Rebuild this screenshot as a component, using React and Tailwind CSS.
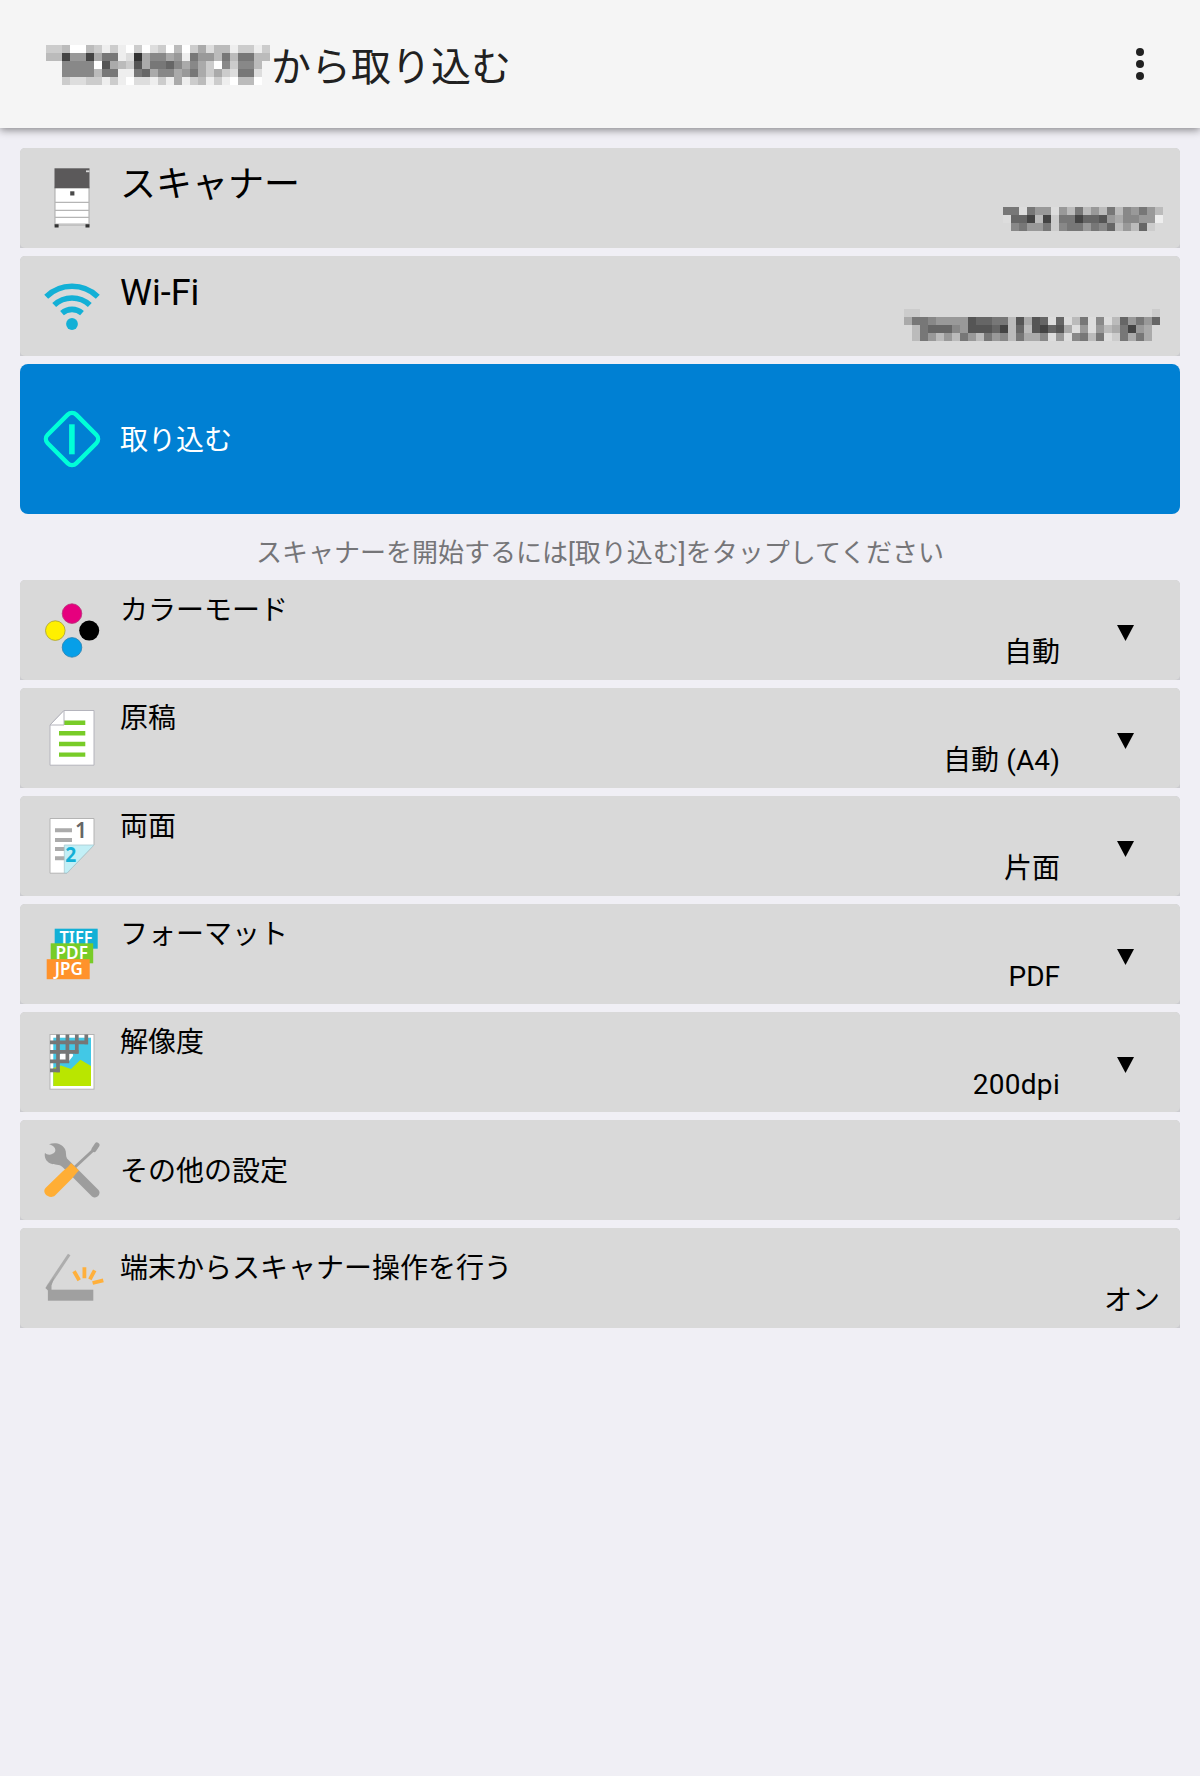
import React from 'react';

// One hex digit per cell, '.' leaves the cell empty
const TITLE_MOSAIC = [
  'ccbffbcecefcfdcfbfcadbbeccec',
  'bb4994a77ed3a88a9e799b7b77bb',
  '..8888f5abc5a7768a8acf8c88b.',
  '..8888b77ee76a88a97acacd77d.',
  '..cddccecefddeceaecbecefbbf.',
];

const SCANNER_MOSAIC = [
  '77d799d9b7b9b7b8979b',
  'd664b4c7746659a8899e',
  '.87997c8779786b9b6c.',
];

const WIFI_MOSAIC = [
  'cc.............................c',
  'a778999956677b5a56d6db7d8db69796',
  '.b76668955564b6b5465ad9d9ba749a.',
  '.b79b9b79b798b7aa8d9d87b7dc7a7a.',
];

function Mosaic({ rows, className }) {
  const cols = rows[0].length;
  return (
    <svg className={className} width={cols * 8} height={rows.length * 8} shapeRendering="crispEdges">
      {rows.map((row, y) =>
        row.split('').map((c, x) =>
          c === '.' ? null : <rect key={`${x}-${y}`} x={x * 8} y={y * 8} width="8" height="8" fill={`#${c}${c}${c}`} />
        )
      )}
    </svg>
  );
}

function Icon({ children }) {
  return (
    <svg className="shrink-0 overflow-visible" width="60" height="60" viewBox="0 0 60 60" fill="none">
      {children}
    </svg>
  );
}

function CopierIcon() {
  return (
    <Icon>
      <rect x="13" y="19" width="34" height="38" fill="#fff" stroke="#a9a9a9" />
      <rect x="12.5" y="0.3" width="35" height="20" fill="#5b595a" />
      <path d="M44 3.3h3.5" stroke="#d9d9d9" strokeWidth="1.8" />
      <rect x="28.2" y="23.3" width="4.2" height="4.2" fill="#4a4a4a" />
      <path d="M13 34.4h34M13 42.4h34M13 49.4h34M13 56h34" stroke="#b5b5b5" strokeWidth="1.2" />
      <path d="M12.6 56.3h4v3.2h-4zM43.5 56.3h4v3.2h-4z" fill="#333" />
    </Icon>
  );
}

function WifiIcon() {
  return (
    <Icon>
      <g stroke="#13b0d6" strokeWidth="5.6">
        <path d="M4.2 20.8A37 37 0 0 1 55.8 20.8" />
        <path d="M12.2 29A26 26 0 0 1 47.8 29" />
        <path d="M20 37.2A15 15 0 0 1 40 37.2" />
      </g>
      <circle cx="30" cy="48" r="5.9" fill="#13b0d6" />
    </Icon>
  );
}

function StartIcon() {
  return (
    <Icon>
      <rect x="9.8" y="9.8" width="40.4" height="40.4" rx="6" transform="rotate(45 30 30)" stroke="#00ffd8" strokeWidth="4.4" />
      <rect x="27.1" y="15.3" width="5.6" height="30" fill="#00ffd8" />
    </Icon>
  );
}

function ColorIcon() {
  return (
    <Icon>
      <circle cx="30" cy="13.6" r="9.8" fill="#e6007e" stroke="#b8307a" strokeWidth="0.8" />
      <circle cx="13.3" cy="30.6" r="9.8" fill="#fff000" stroke="#a8a030" strokeWidth="0.8" />
      <circle cx="47.2" cy="30.6" r="10" fill="#000" />
      <circle cx="30" cy="47.4" r="9.8" fill="#069fe8" stroke="#2a80b0" strokeWidth="0.8" />
    </Icon>
  );
}

function OriginalIcon() {
  return (
    <Icon>
      <path d="M22 2.5H52V57.2H8V17z" fill="#fff" stroke="#b4b4bc" />
      <path d="M22 14.8h21.3M17 25.3h26.3M17 36h26.3M17 46.6h26.3" stroke="#78cc28" strokeWidth="4.4" />
      <path d="M22 2.5V17H8z" fill="#fff" stroke="#b4b4bc" />
    </Icon>
  );
}

function DuplexIcon() {
  return (
    <Icon>
      <path d="M8 2.5H52V29L25 57.2H8z" fill="#fff" stroke="#b4b4b4" />
      <path d="M13 14.3h17M13 24h17M13 33h12M13 42.3h12" stroke="#ababab" strokeWidth="4" />
      <path d="M22.3 29H52L25 57H22.3z" fill="#c2eff6" stroke="#a9c9d0" strokeWidth="0.8" />
      <text x="33" y="21.7" fontSize="21" fontWeight="600" fill="#666" className="font-['Noto_Sans']">1</text>
      <text x="23.3" y="45.9" fontSize="20.5" fontWeight="700" fill="#13b0d6" textLength="11" lengthAdjust="spacingAndGlyphs" className="font-['Noto_Sans']">2</text>
    </Icon>
  );
}

function FormatIcon() {
  return (
    <Icon>
      <g fill="#fff" fontSize="17.5" fontWeight="600" className="font-['Noto_Sans']">
        <rect x="12.7" y="4.7" width="43" height="20" fill="#13b0d6" />
        <text x="17.5" y="19.9" textLength="33" lengthAdjust="spacingAndGlyphs">TIFF</text>
        <rect x="8.7" y="19.3" width="42.5" height="20" fill="#78cc28" />
        <text x="13.5" y="34.8" textLength="32.5" lengthAdjust="spacingAndGlyphs">PDF</text>
        <rect x="4.7" y="35.2" width="43" height="20" fill="#ff922b" />
        <text x="12.8" y="51.3" textLength="28" lengthAdjust="spacingAndGlyphs">JPG</text>
      </g>
    </Icon>
  );
}

function ResolutionIcon() {
  return (
    <Icon>
      <rect x="8" y="2.5" width="44" height="54.7" fill="#fff" stroke="#b4b4b4" />
      <rect x="11.3" y="5.7" width="37.7" height="48.3" fill="#42c8e6" />
      <path d="M17 24c0-4 8-5 9-1 3-3 6-1 5 1l-4 5H17z" fill="#fff" />
      <path d="M11.3 36L19 33.5 29 37l9.500-9.300L49 34v20H11.300z" fill="#b9e600" />
      <g stroke="#767676" strokeWidth="3.7">
        <path d="M16 2.5v37.7M25.4 2.5v28.6M34.8 2.5v19M44.3 2.5v9.7" />
        <path d="M8 10.4h38M8 19.8h28.5M8 29.3h19M8 38.4h9.8" />
      </g>
    </Icon>
  );
}

function ToolsIcon() {
  return (
    <Icon>
      <path d="M55 5L52 9.5" stroke="#9d9d9d" strokeWidth="5" strokeLinecap="round" />
      <path d="M53 8.5L32 28" stroke="#9d9d9d" strokeWidth="3" />
      <path d="M7 4.2C13 1.8 20 3.6 23 9c1.6 3 .4 6.5 2 9.5L56.5 50c3.5 4-2.500 10-6.500 6.500L20.500 27C17 23.500 13 25.500 8.500 23.500 4 21.500 2 17 3 12.700 5.500 16 11 14.800 13 11.800 14.500 8.500 11.500 5.500 7 4.200z" fill="#9d9d9d" />
      <path d="M29 23L37 30.500C34 33 32.500 36 30 38.500L13 55.500C8 60-1 53 3.500 48L20.500 31.500C24 28.500 26 27.500 29 23z" fill="#ffae35" />
    </Icon>
  );
}

function RemoteIcon() {
  return (
    <Icon>
      <path d="M27.2 6.5L5.5 39" stroke="#adadad" strokeWidth="3" />
      <path d="M12.500 28.500L3.300 40 6 42.500h3.500V37.500z" fill="#a0a0a0" />
      <rect x="5.9" y="41.7" width="45.4" height="11" fill="#a0a0a0" />
      <path d="M32 23.3l5.2 9M42.4 19.3v11M52.7 22.3l-4.800 9M50.600 35l10.700-2.700" stroke="#ffb03c" strokeWidth="3.8" />
    </Icon>
  );
}

function Row({ icon, children }) {
  return (
    <div className="h-[100px] rounded-t-[5px] bg-[#cbcbcf]">
      <div className="flex h-full items-center gap-[18px] rounded-[5px] bg-[#d9d9d9] pl-[22px]">
        {icon}
        {children}
      </div>
    </div>
  );
}

function SelectRow({ icon, label, value, valueClass = '' }) {
  return (
    <Row icon={icon}>
      <div className="flex h-full flex-1 flex-col justify-between pt-2.5 pb-1.5 text-[28px] leading-[42px]">
        <span>{label}</span>
        <span className={`text-right ${valueClass}`}>{value}</span>
      </div>
      <svg className="mt-[6px] mr-[46px] ml-[39px] shrink-0" width="17" height="16" viewBox="0 0 17 16">
        <path d="M0 0h17L8.5 16z" />
      </svg>
    </Row>
  );
}

const settings = [
  { label: 'カラーモード', value: '自動', icon: <ColorIcon /> },
  { label: '原稿', value: '自動 (A4)', valueClass: 'tracking-[0.1px]', icon: <OriginalIcon /> },
  { label: '両面', value: '片面', icon: <DuplexIcon /> },
  { label: 'フォーマット', value: 'PDF', icon: <FormatIcon /> },
  { label: '解像度', value: '200dpi', valueClass: 'tracking-[0.3px]', icon: <ResolutionIcon /> },
];

export default function App() {
  return (
    <div className="min-h-[1776px] w-[1200px] bg-[#f0eff5] font-[Roboto,'Noto_Sans_CJK_JP',sans-serif] text-black">
      {/* Top bar */}
      <header className="flex h-32 items-center justify-between bg-[#f5f5f5] pr-[54px] pl-[46px] shadow-[0_2px_8px_rgba(0,0,0,0.45)]">
        <h1 className="flex items-center pt-0.5 text-[40px] leading-[60px] text-[#212121]">
          <Mosaic rows={TITLE_MOSAIC} className="mr-px" />
          <span className="pt-[5px]">から取り込む</span>
        </h1>
        <svg width="12" height="32" viewBox="0 0 12 32" fill="#212121">
          <circle cx="6" cy="4" r="4" />
          <circle cx="6" cy="16" r="4" />
          <circle cx="6" cy="28" r="4" />
        </svg>
      </header>

      <main className="flex flex-col gap-2 px-5 pt-5">
        <Row icon={<CopierIcon />}>
          <div className="flex h-full flex-1 flex-col pt-2 pr-[17px]">
            <span className="h-[51px] text-4xl leading-[58px]">スキャナー</span>
            <Mosaic rows={SCANNER_MOSAIC} className="self-end" />
          </div>
        </Row>
        <Row icon={<WifiIcon />}>
          <div className="flex h-full flex-1 flex-col pt-2 pr-5">
            <span className="h-[45px] text-4xl leading-[58px]">Wi-Fi</span>
            <Mosaic rows={WIFI_MOSAIC} className="self-end" />
          </div>
        </Row>

        <button className="flex h-[150px] items-center gap-[18px] rounded-lg bg-[#0080d3] pl-[22px] text-[28px] text-white">
          <StartIcon />
          <span className="pt-1">取り込む</span>
        </button>

        <p className="h-[50px] text-center text-[26px] leading-[62px] text-[#757578]">
          スキャナーを開始するには[取り込む]をタップしてください
        </p>

        {settings.map((s) => (
          <SelectRow key={s.label} {...s} />
        ))}

        <Row icon={<ToolsIcon />}>
          <span className="pt-1 text-[28px]">その他の設定</span>
        </Row>
        <Row icon={<RemoteIcon />}>
          <div className="flex h-full flex-1 flex-col pt-[21px] pr-5 text-[28px]">
            <span className="h-8 leading-[40px]">端末からスキャナー操作を行う</span>
            <span className="text-right leading-[40px]">オン</span>
          </div>
        </Row>
      </main>
    </div>
  );
}
